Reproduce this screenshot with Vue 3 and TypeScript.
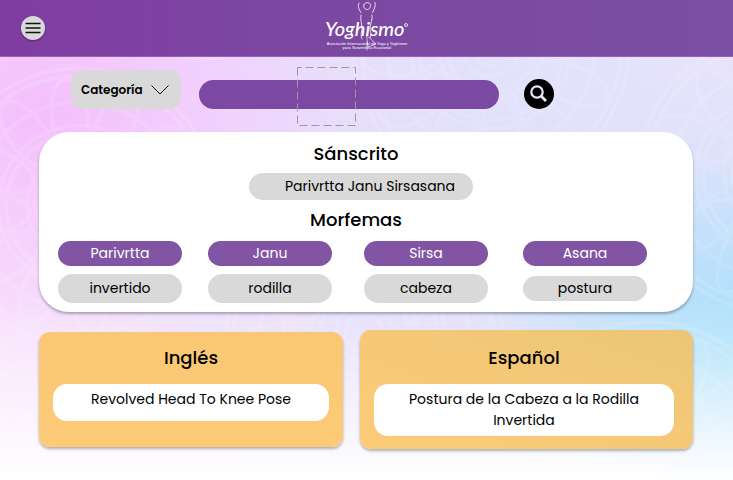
<script setup lang="ts">
import { ref } from 'vue'

interface Morpheme {
  root: string
  meaning: string
  compact?: boolean
}

const category = ref('')
const query = ref('')
const categories: string[] = ['Asanas', 'Pranayamas', 'Mudras']

const morphemes: Morpheme[] = [
  { root: 'Parivrtta', meaning: 'invertido' },
  { root: 'Janu', meaning: 'rodilla' },
  { root: 'Sirsa', meaning: 'cabeza' },
  { root: 'Asana', meaning: 'postura', compact: true },
]

const rings: number[] = [14, 22, 34, 40, 56, 62, 80, 100, 106]
</script>

<template>
  <div class="page">
    <svg class="texture" aria-hidden="true">
      <defs>
        <pattern id="mandala" width="240" height="240" patternUnits="userSpaceOnUse" patternTransform="rotate(24) scale(1.3)">
          <g fill="none" stroke="#fff" stroke-width="3">
            <circle v-for="r in rings" :key="r" cx="120" cy="120" :r="r" />
            <ellipse
              v-for="n in 12"
              :key="n"
              cx="120"
              cy="52"
              rx="14"
              ry="30"
              :transform="`rotate(${n * 30} 120 120)`"
            />
          </g>
        </pattern>
      </defs>
      <rect width="100%" height="100%" fill="url(#mandala)" />
    </svg>

    <header class="header">
      <button class="menu" type="button" aria-label="Menú">
        <svg viewBox="0 0 16 12" width="16" height="12">
          <path d="M0.500 1.500H15.500M0.500 6H15.500M0.500 10.500H15.500" stroke="#111" stroke-width="1.700" />
        </svg>
      </button>
      <a class="brand" href="#">
        <svg viewBox="0 0 90 56" width="90" height="56">
          <g fill="none" stroke="#fff" stroke-linecap="round" stroke-width="0.800">
            <path d="M37 3C35.500 6 36.500 9 39 12.500M53 2.500C54 5 52.500 9 50.500 12.500" />
            <path d="M42 4.500C43 2 47.500 2 48.500 4.500C49 7.500 47 10 44.500 9.500M42 4.500C41 7 42 8.500 43.500 9" />
            <path d="M39 15C38 19 40 25 40 28C40 32 38 35 40 39M50 15C51 19 48 24 48 29C48.500 33 50 35 48 38" />
            <path d="M44.500 35L54 44L46 47L44.500 35M45 42V50" stroke-opacity="0.800" />
          </g>
          <text class="brand-name" x="3" y="36">Yoghismo</text>
          <circle cx="84" cy="25" r="1.500" fill="none" stroke="#fff" stroke-width="0.800" />
          <text class="brand-tag" x="45" y="45">Asociación Internacional de Yoga y Yoghismo</text>
          <text class="brand-tag" x="45" y="49">para Suramérica Ecuatorial</text>
        </svg>
      </a>
    </header>

    <main class="content">
      <form class="toolbar" @submit.prevent>
        <div class="category">
          <select v-model="category" aria-label="Categoría">
            <option value="">Categoría</option>
            <option v-for="c in categories" :key="c" :value="c">{{ c }}</option>
          </select>
          <svg class="chevron" viewBox="0 0 18 10" width="18" height="10" aria-hidden="true">
            <path d="M0.500 0.500L9 9L17.500 0.500" fill="none" stroke="#111" />
          </svg>
        </div>
        <div class="search">
          <input v-model="query" type="text" aria-label="Buscar" />
          <svg class="frame" viewBox="0 0 60 60" width="60" height="60" aria-hidden="true">
            <rect x="0.500" y="0.500" width="58" height="58" fill="none" stroke="#9d979f" stroke-dasharray="8 4" stroke-dashoffset="4" />
          </svg>
        </div>
        <button class="go" type="submit" aria-label="Buscar">
          <svg viewBox="0 0 30 30" width="30" height="30">
            <circle cx="13" cy="13" r="5.700" fill="none" stroke="#eee6fc" stroke-width="2.200" />
            <path d="M17 17L22 22" stroke="#eee6fc" stroke-width="2.800" />
          </svg>
        </button>
      </form>

      <section class="sanskrit">
        <h2>Sánscrito</h2>
        <p class="term">Parivrtta Janu Sirsasana</p>
        <h2>Morfemas</h2>
        <div class="morphemes">
          <div v-for="m in morphemes" :key="m.root" class="morpheme">
            <span class="pill root">{{ m.root }}</span>
            <span class="meaning-slot">
              <span class="pill meaning" :class="{ compact: m.compact }">{{ m.meaning }}</span>
            </span>
          </div>
        </div>
      </section>

      <div class="translations">
        <section class="translation english">
          <h2>Inglés</h2>
          <p>Revolved Head To Knee Pose</p>
        </section>
        <section class="translation spanish">
          <h2>Español</h2>
          <p>Postura de la Cabeza a la Rodilla Invertida</p>
        </section>
      </div>
    </main>
  </div>
</template>

<style>
body {
  margin: 0;
}
</style>

<style scoped>
.page {
  position: relative;
  min-height: 100vh;
  box-sizing: border-box;
  font-family: Poppins, Inter, "Liberation Sans", sans-serif;
  font-size: 14px;
  line-height: 21px;
  color: #000;
  background:
    linear-gradient(to bottom, transparent 62%, rgba(255, 255, 255, 0.700) 90%, #fff 100%),
    radial-gradient(ellipse 36% 42% at 102% 74%, #a6e0fb 0%, rgba(166, 224, 251, 0) 100%),
    radial-gradient(ellipse 50% 50% at 100% 5%, #ebe4fb 0%, rgba(235, 228, 251, 0) 100%),
    radial-gradient(ellipse 42% 45% at 6% 24%, #f4befd 0%, rgba(244, 190, 253, 0) 100%),
    linear-gradient(to right, #f8dffc 0%, #e6dffc 50%, #d3e0fb 100%);
}

.texture {
  position: absolute;
  inset: 0;
  width: 100%;
  height: 100%;
  opacity: 0.120;
}

.header {
  position: relative;
  display: grid;
  grid-template-columns: 1fr auto 1fr;
  align-items: center;
  height: 57px;
  padding: 0 21px;
  border-bottom: 1px solid #9560b5;
  box-sizing: border-box;
  background: linear-gradient(to right, #803da2, #7b48a1 45%, #7b4fa3);
}

.menu {
  display: grid;
  place-items: center;
  width: 24px;
  height: 24px;
  padding: 0;
  border: 0;
  border-radius: 50%;
  background: #d9d9d9;
  box-shadow: 0 1px 2px rgba(0, 0, 0, 0.400);
}

.brand,
.brand svg {
  display: block;
}

.brand text {
  fill: #fff;
}

.brand-name {
  font-family: Lato, sans-serif;
  font-style: italic;
  font-weight: 500;
  font-size: 20px;
}

.brand-tag {
  font-family: "Liberation Sans", sans-serif;
  font-size: 4px;
  text-anchor: middle;
}

.content {
  position: relative;
  padding: 13px 40px 31px 39px;
}

.toolbar {
  display: flex;
  align-items: flex-end;
  padding: 0 139px 0 32px;
}

.category {
  display: grid;
  align-items: center;
  width: 110px;
  margin-right: 18px;
}

.category select {
  grid-area: 1 / 1;
  appearance: none;
  width: 100%;
  height: 39px;
  padding: 0 10px;
  border: 0;
  border-radius: 12px;
  background: #d9d9d9;
  color: #000;
  font-family: inherit;
  font-size: 12px;
  font-weight: 600;
}

.chevron {
  grid-area: 1 / 1;
  justify-self: end;
  margin-right: 12px;
  pointer-events: none;
}

.search {
  position: relative;
  flex: 1;
  margin-right: 25px;
}

.search input {
  display: block;
  box-sizing: border-box;
  width: 100%;
  height: 29px;
  padding: 0 16px;
  border: 0;
  border-radius: 15px;
  background: #7b48a2;
  color: #fff;
  font: inherit;
}

.frame {
  position: absolute;
  top: -13px;
  left: 98px;
  pointer-events: none;
}

.go {
  width: 30px;
  height: 30px;
  padding: 0;
  border: 0;
  border-radius: 50%;
  background: #000;
}

.go svg {
  display: block;
}

h2 {
  margin: 0;
  font-size: 18px;
  font-weight: 500;
  line-height: 27px;
  text-align: center;
}

.sanskrit {
  margin-top: 23px;
  padding: 8px 29px 9px 19px;
  border-radius: 30px;
  background: #fff;
  box-shadow: 0 2px 3px rgba(0, 0, 0, 0.300);
}

.sanskrit h2 {
  padding-right: 10px;
}

.term {
  box-sizing: border-box;
  width: fit-content;
  margin: 6px auto;
  padding: 3px 18px 3px 36px;
  border-radius: 14px;
  background: #d9d9d9;
  text-align: center;
}

.morphemes {
  display: grid;
  grid-template-columns: 150fr 156fr 159fr 141fr;
  margin-top: 8px;
}

.morpheme {
  display: flex;
  flex-direction: column;
  gap: 8px;
}

.pill {
  display: block;
  box-sizing: border-box;
  width: 124px;
  border-radius: 15px;
  text-align: center;
}

.root {
  padding: 2px 8px;
  background: #8155a3;
  color: #fff;
}

.meaning-slot {
  display: flex;
  align-items: center;
  min-height: 29px;
}

.meaning {
  padding: 4px 8px;
  background: #d9d9d9;
}

.meaning.compact {
  padding: 2px 8px;
}

.translations {
  display: grid;
  grid-template-columns: 304fr 333fr;
  align-items: center;
  gap: 17px;
  margin-top: 18px;
}

.translation {
  border-radius: 11px;
  box-shadow: 0 2px 3px rgba(0, 0, 0, 0.300);
}

.english {
  padding: 12px 14px 26px;
  background: linear-gradient(to bottom, #fac775, #fdca77);
}

.spanish {
  padding: 14px 19px 13px 14px;
  background: linear-gradient(to top right, #fbca77 20%, #ebc675);
}

.translation p {
  box-sizing: border-box;
  min-height: 37px;
  margin: 13px 0 0;
  padding: 5px 32px;
  border-radius: 14px;
  background: #fff;
  text-align: center;
}
</style>
